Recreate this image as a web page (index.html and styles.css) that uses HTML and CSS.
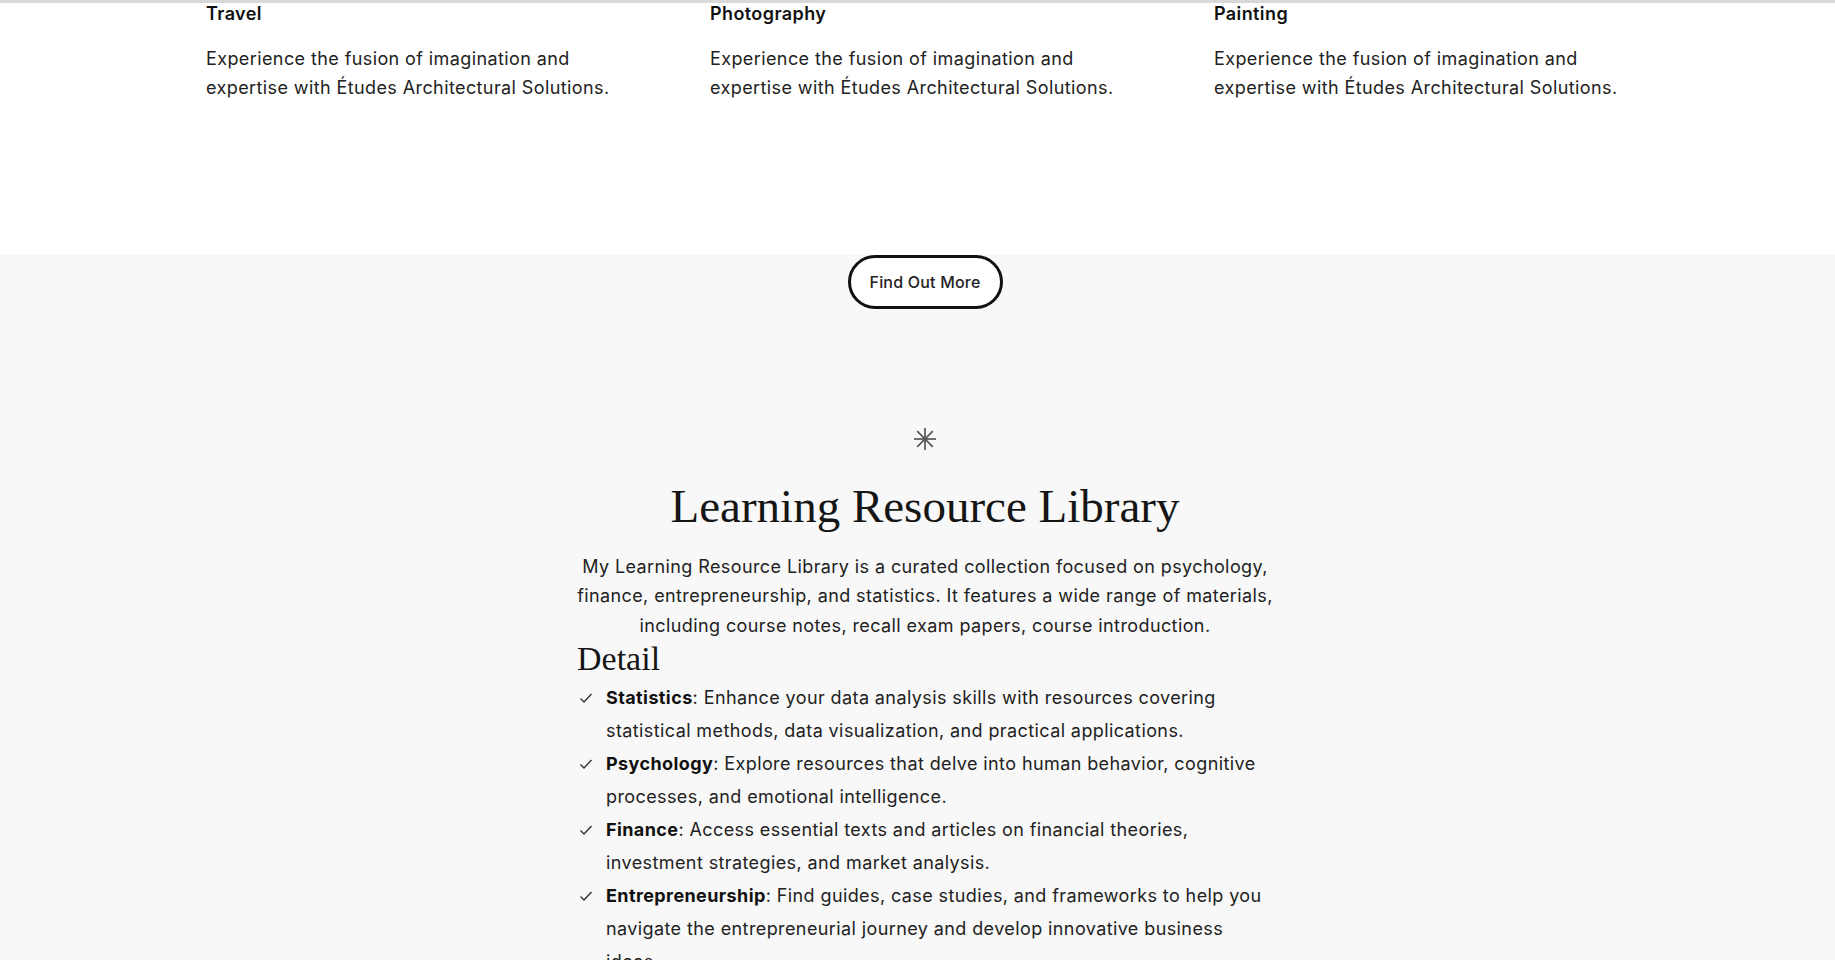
FILE: index.html
```html
<!DOCTYPE html>
<html lang="en">
<head>
<meta charset="utf-8">
<title>Learning Resource Library</title>
<link rel="stylesheet" href="styles.css">
</head>
<body>
<div class="topline"></div>
<section class="features">
  <div class="features-grid">
    <article class="feature">
      <h3 class="feature-title">Travel</h3>
      <p class="feature-text">Experience the fusion of imagination and expertise with Études Architectural Solutions.</p>
    </article>
    <article class="feature">
      <h3 class="feature-title">Photography</h3>
      <p class="feature-text">Experience the fusion of imagination and expertise with Études Architectural Solutions.</p>
    </article>
    <article class="feature">
      <h3 class="feature-title">Painting</h3>
      <p class="feature-text">Experience the fusion of imagination and expertise with Études Architectural Solutions.</p>
    </article>
  </div>
</section>
<section class="library">
  <div class="library-inner">
    <a class="btn" href="#">Find Out More</a>
    <svg class="star" width="24" height="24" viewBox="0 0 24 24" aria-hidden="true">
      <g stroke="#555" stroke-width="1.7" stroke-linecap="butt">
        <line x1="12" y1="1" x2="12" y2="23"/>
        <line x1="1" y1="12" x2="23" y2="12"/>
        <line x1="4.2" y1="4.2" x2="19.8" y2="19.8"/>
        <line x1="19.8" y1="4.2" x2="4.2" y2="19.8"/>
      </g>
    </svg>
    <h2 class="library-title">Learning Resource Library</h2>
    <p class="lead">My Learning Resource Library is a curated collection focused on psychology, finance, entrepreneurship, and statistics. It features a wide range of materials, including course notes, recall exam papers, course introduction.</p>
    <h3 class="detail-title">Detail</h3>
    <ul class="checklist">
      <li class="check-item">
        <span class="check-icon"><svg width="14" height="14" viewBox="0 0 14 14" aria-hidden="true"><polyline points="1.5,7.5 5,11 12.5,3" fill="none" stroke="#333" stroke-width="1.4"/></svg></span>
        <span class="check-text"><strong>Statistics</strong>: Enhance your data analysis skills with resources covering statistical methods, data visualization, and practical applications.</span>
      </li>
      <li class="check-item">
        <span class="check-icon"><svg width="14" height="14" viewBox="0 0 14 14" aria-hidden="true"><polyline points="1.5,7.5 5,11 12.5,3" fill="none" stroke="#333" stroke-width="1.4"/></svg></span>
        <span class="check-text"><strong>Psychology</strong>: Explore resources that delve into human behavior, cognitive processes, and emotional intelligence.</span>
      </li>
      <li class="check-item">
        <span class="check-icon"><svg width="14" height="14" viewBox="0 0 14 14" aria-hidden="true"><polyline points="1.5,7.5 5,11 12.5,3" fill="none" stroke="#333" stroke-width="1.4"/></svg></span>
        <span class="check-text"><strong>Finance</strong>: Access essential texts and articles on financial theories, investment strategies, and market analysis.</span>
      </li>
      <li class="check-item">
        <span class="check-icon"><svg width="14" height="14" viewBox="0 0 14 14" aria-hidden="true"><polyline points="1.5,7.5 5,11 12.5,3" fill="none" stroke="#333" stroke-width="1.4"/></svg></span>
        <span class="check-text"><strong>Entrepreneurship</strong>: Find guides, case studies, and frameworks to help you navigate the entrepreneurial journey and develop innovative business ideas.</span>
      </li>
    </ul>
  </div>
</section>
</body>
</html>
```

FILE: styles.css
```css
* { box-sizing: border-box; }

html, body {
  margin: 0;
  padding: 0;
  background: #ffffff;
  color: #222222;
  font-family: Inter, "Noto Sans", sans-serif;
  font-size: 18px;
  letter-spacing: 0.4px;
  overflow: hidden;
}

.topline {
  height: 3px;
  background: #d8d8d8;
}

.features {
  background: #ffffff;
  padding: 0 0 153px 15px;
}

.features-grid {
  display: grid;
  grid-template-columns: repeat(3, 430px);
  column-gap: 74px;
  justify-content: center;
}

.feature-title {
  margin: 0 0 19px;
  font-size: 18px;
  font-weight: 600;
  line-height: 1.2;
  color: #111111;
}

.feature-text {
  margin: 0;
  font-size: 18px;
  line-height: 29.3px;
  color: #222222;
}

.library {
  background: #f8f8f8;
  padding: 0 0 40px 15px;
}

.library-inner {
  width: 700px;
  margin: 0 auto;
  display: flex;
  flex-direction: column;
  align-items: center;
}

.btn {
  display: inline-block;
  padding: 14px 19px;
  border: 3px solid #111111;
  border-radius: 999px;
  background: #ffffff;
  color: #222222;
  font-size: 16px;
  font-weight: 500;
  line-height: 20px;
  letter-spacing: 0.2px;
  text-decoration: none;
}

.star {
  display: block;
  margin-top: 118px;
}

.library-title {
  margin: 27px 0 0;
  font-family: "Liberation Serif", serif;
  font-weight: 400;
  font-size: 47px;
  line-height: 1.2;
  letter-spacing: 0;
  color: #151515;
}

.lead {
  margin: 17px 0 0;
  text-align: center;
  font-size: 18px;
  line-height: 29.7px;
  color: #222222;
}

.detail-title {
  align-self: stretch;
  margin: -2px 0 0;
  padding-left: 2px;
  font-family: "Liberation Serif", serif;
  font-weight: 400;
  font-size: 34px;
  line-height: 1.2;
  letter-spacing: 0;
  color: #151515;
}

.checklist {
  align-self: stretch;
  list-style: none;
  margin: 2px 0 0;
  padding: 0 0 0 2px;
}

.check-item {
  display: grid;
  grid-template-columns: 29px 1fr;
  font-size: 18px;
  line-height: 33px;
  color: #222222;
}

.check-icon {
  display: flex;
  align-items: center;
  height: 33px;
  padding-left: 2px;
}

.check-icon svg { display: block; }

.check-text strong {
  font-weight: 700;
  color: #111111;
}
```
